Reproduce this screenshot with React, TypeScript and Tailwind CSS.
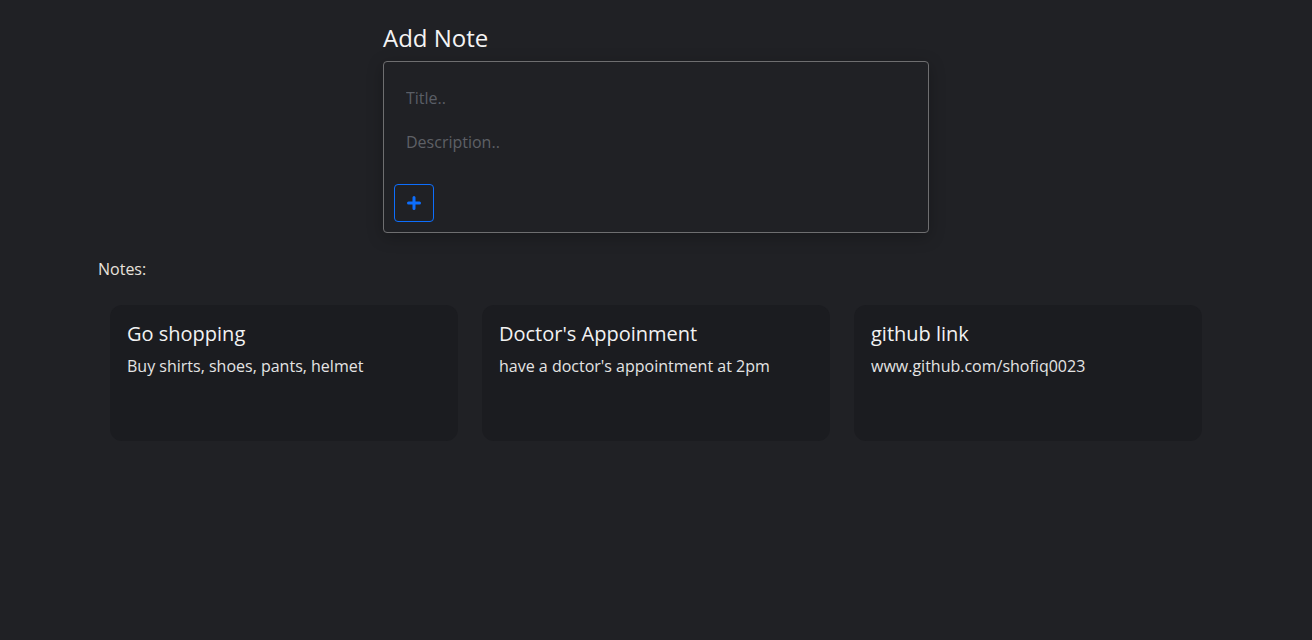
import { useState } from "react";

type Note = { title: string; description: string };

const initialNotes: Note[] = [
  { title: "Go shopping", description: "Buy shirts, shoes, pants, helmet" },
  { title: "Doctor's Appoinment", description: "have a doctor's appointment at 2pm" },
  { title: "github link", description: "www.github.com/shofiq0023" },
];

function PlusIcon() {
  return (
    <svg width="16" height="16" viewBox="0 0 16 16" fill="none">
      <path d="M8 2.5v11M2.5 8h11" stroke="#0d6efd" strokeWidth="3" strokeLinecap="round" />
    </svg>
  );
}

function AddNote({ onAdd }: { onAdd: (n: Note) => void }) {
  const [title, setTitle] = useState("");
  const [description, setDescription] = useState("");

  const handleAdd = () => {
    if (!title.trim()) return;
    onAdd({ title, description });
    setTitle("");
    setDescription("");
  };

  return (
    <div className="w-[546px] ml-[285px]">
      <h2 className="text-[24px] leading-[29px] pt-[23px] mb-[9px] text-[#f4f4f4]">Add Note</h2>
      <div className="border border-[#6e6e70] rounded-[4px] px-[10px] pt-[10px] pb-[10px] shadow-[0_4px_16px_rgba(0,0,0,0.25)]">
        <input
          value={title}
          onChange={(e) => setTitle(e.target.value)}
          placeholder="Title.."
          className="block w-full h-[40px] mt-[6px] px-[12px] bg-transparent text-[16px] text-[#e6e6e6] placeholder:text-[#5a5e66] outline-none"
        />
        <input
          value={description}
          onChange={(e) => setDescription(e.target.value)}
          placeholder="Description.."
          className="block w-full h-[40px] mt-[4px] px-[12px] bg-transparent text-[16px] text-[#e6e6e6] placeholder:text-[#5e6066] outline-none"
        />
        <button
          onClick={handleAdd}
          className="mt-[22px] w-[40px] h-[38px] flex items-center justify-center border border-[#0d6efd] rounded-[4px]"
        >
          <PlusIcon />
        </button>
      </div>
    </div>
  );
}

function NoteCard({ note }: { note: Note }) {
  return (
    <div className="h-[136px] rounded-[12px] bg-[#1b1c20] px-[17px] pt-[15px]">
      <h3 className="text-[20px] leading-[28px] text-[#f2f2f2]">{note.title}</h3>
      <p className="mt-[6px] text-[16px] leading-[24px] text-[#e4e4e4]">{note.description}</p>
    </div>
  );
}

export default function App() {
  const [notes, setNotes] = useState<Note[]>(initialNotes);

  return (
    <div className="min-h-screen bg-[#202125] font-['Open_Sans',sans-serif]">
      <div className="w-[1116px] mx-auto">
        <AddNote onAdd={(n) => setNotes([...notes, n])} />
        <p className="mt-[24px] text-[16px] leading-[24px] text-[#e8e2dc]">Notes:</p>
        <div className="mt-[24px] grid grid-cols-3 gap-[24px] px-[12px]">
          {notes.map((note, i) => (
            <NoteCard key={i} note={note} />
          ))}
        </div>
      </div>
    </div>
  );
}
